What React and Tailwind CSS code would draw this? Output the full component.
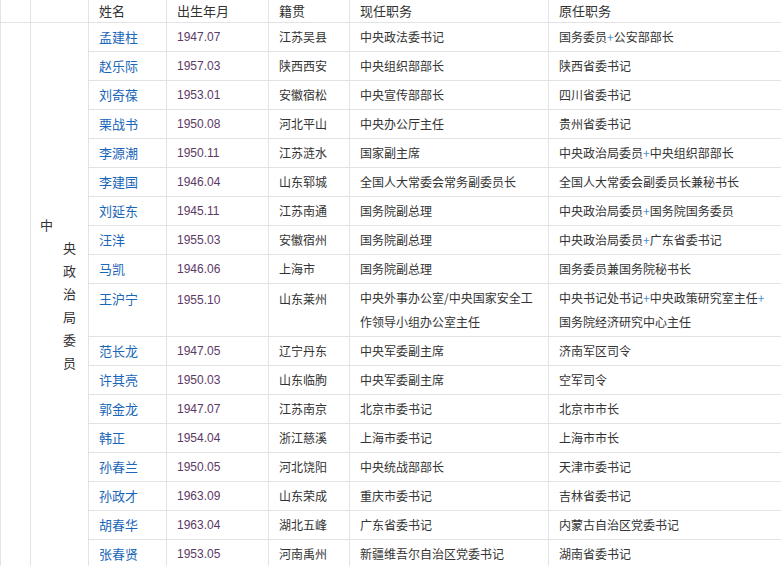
const rows = [
["孟建柱","1947.07","江苏吴县","中央政法委书记",["国务委员","公安部部长"]],
["赵乐际","1957.03","陕西西安","中央组织部部长",["陕西省委书记"]],
["刘奇葆","1953.01","安徽宿松","中央宣传部部长",["四川省委书记"]],
["栗战书","1950.08","河北平山","中央办公厅主任",["贵州省委书记"]],
["李源潮","1950.11","江苏涟水","国家副主席",["中央政治局委员","中央组织部部长"]],
["李建国","1946.04","山东郓城","全国人大常委会常务副委员长",["全国人大常委会副委员长兼秘书长"]],
["刘延东","1945.11","江苏南通","国务院副总理",["中央政治局委员","国务院国务委员"]],
["汪洋","1955.03","安徽宿州","国务院副总理",["中央政治局委员","广东省委书记"]],
["马凯","1946.06","上海市","国务院副总理",["国务委员兼国务院秘书长"]],
["王沪宁","1955.10","山东莱州","中央外事办公室/中央国家安全工|作领导小组办公室主任",["中央书记处书记","中央政策研究室主任","|国务院经济研究中心主任"],true],
["范长龙","1947.05","辽宁丹东","中央军委副主席",["济南军区司令"]],
["许其亮","1950.03","山东临朐","中央军委副主席",["空军司令"]],
["郭金龙","1947.07","江苏南京","北京市委书记",["北京市市长"]],
["韩正","1954.04","浙江慈溪","上海市委书记",["上海市市长"]],
["孙春兰","1950.05","河北饶阳","中央统战部部长",["天津市委书记"]],
["孙政才","1963.09","山东荣成","重庆市委书记",["吉林省委书记"]],
["胡春华","1963.04","湖北五峰","广东省委书记",["内蒙古自治区党委书记"]],
["张春贤","1953.05","河南禹州","新疆维吾尔自治区党委书记",["湖南省委书记"]],
];
const b = "border-r border-b border-[#e3e3e3]";
const br = (s)=>s.split("|").map((p,k)=><span key={k}>{k>0&&<br/>}{p}</span>);
export default function App(){
  return (
    <div className="w-[781px] h-[566px] overflow-hidden bg-white text-[12px] text-[#333]" style={{fontFamily:'"Noto Sans CJK SC","Liberation Sans",sans-serif'}}>
      <table className="border-collapse table-fixed w-[800px] border-l border-[#e3e3e3] whitespace-nowrap">
        <colgroup>
          <col className="w-[30px]"/><col className="w-[58px]"/><col className="w-[78px]"/><col className="w-[102px]"/><col className="w-[81px]"/><col className="w-[199px]"/><col className="w-[252px]"/>
        </colgroup>
        <tbody>
          <tr className="h-[22px] text-[13px]">
            <td className={b}></td><td className={b}></td>
            <td className={`${b} pl-[10px] leading-[20px]`}>姓名</td>
            <td className={`${b} pl-[10px]`}>出生年月</td>
            <td className={`${b} pl-[10px]`}>籍贯</td>
            <td className={`${b} pl-[10px]`}>现任职务</td>
            <td className={`${b} pl-[10px]`}>原任职务</td>
          </tr>
          {rows.map((r,i)=>(
            <tr key={i} className={r[5]?"h-[53px]":"h-[29px]"}>
              {i===0 && <td rowSpan={18} className={b}></td>}
              {i===0 && <td rowSpan={18} className={`${b} align-top pt-[190px] text-[13px]`}>
                <div className="leading-[23px]"><div className="pl-[9px]">中</div>
                {"央政治局委员".split("").map(c=><div key={c} className="pl-[32px]">{c}</div>)}</div></td>}
              <td className={`${b} pl-[10px] text-[13px] text-[#1a66b8] ${r[5]?"align-top pt-[5px]":""}`}>{r[0]}</td>
              <td className={`${b} pl-[10px] text-[#5c3a66] ${r[5]?"align-top pt-[7px]":""}`} style={{fontFamily:'"Liberation Sans",sans-serif'}}>{r[1]}</td>
              <td className={`${b} pl-[10px] ${r[5]?"align-top pt-[6px]":""}`}>{r[2]}</td>
              <td className={`${b} pl-[10px] ${r[5]?"leading-[24px] py-[1px]":""}`}>{br(r[3])}</td>
              <td className={`${b} pl-[10px] ${r[5]?"leading-[24px] py-[1px]":""}`}>
                {r[4].map((t,j)=><span key={j}>{j>0 && <span className="text-[#4a8fd0]">+</span>}{br(t)}</span>)}
              </td>
            </tr>
          ))}
        </tbody>
      </table>
    </div>
  );
}
